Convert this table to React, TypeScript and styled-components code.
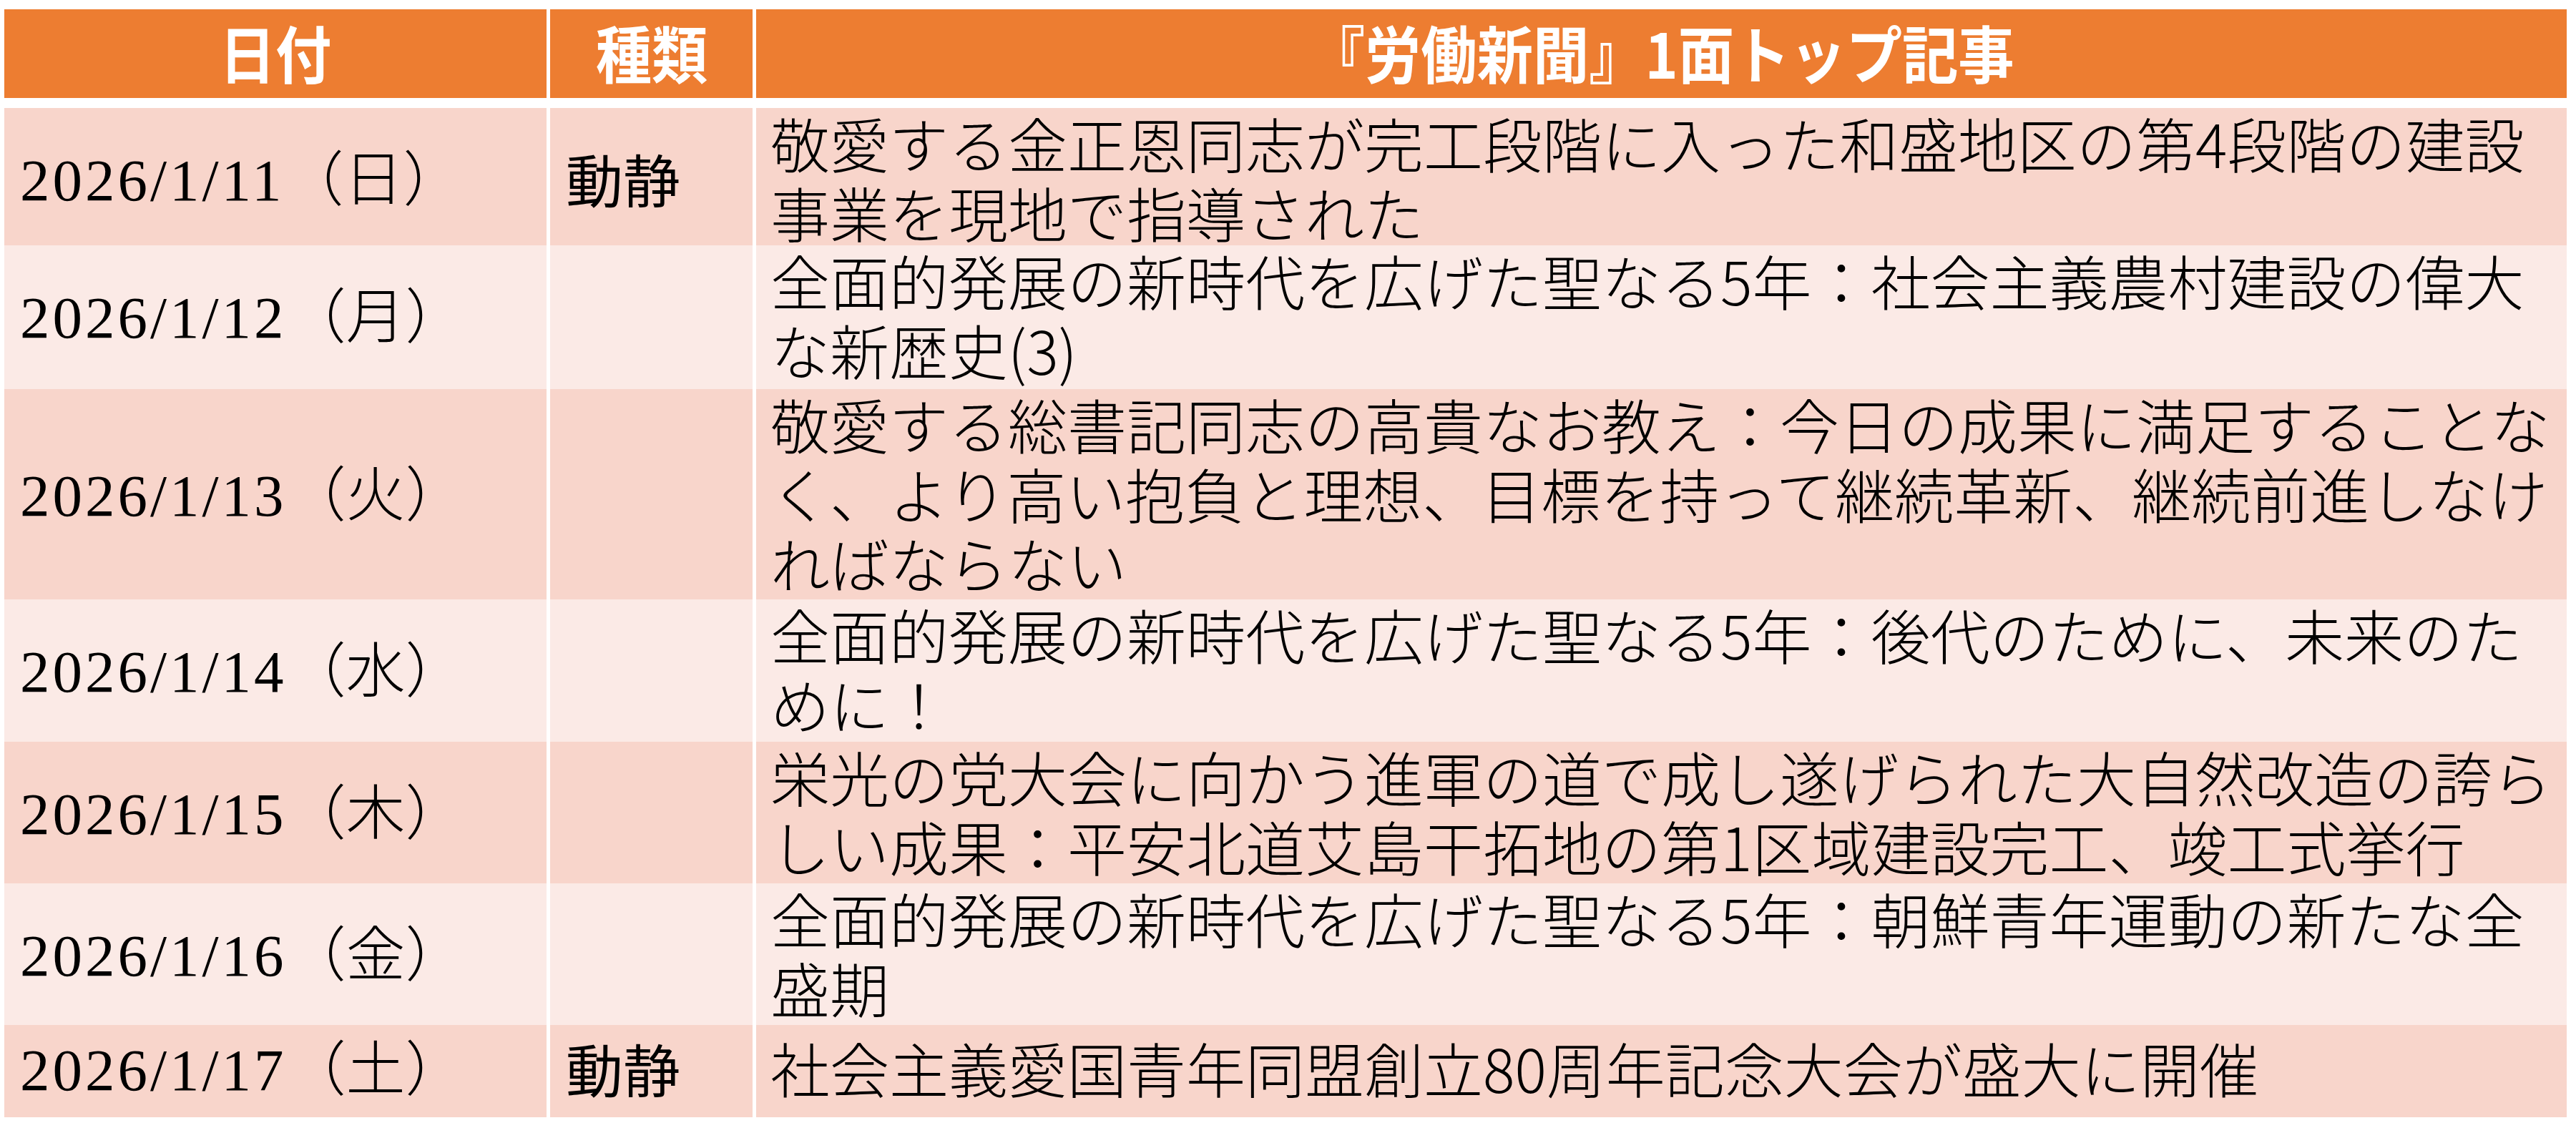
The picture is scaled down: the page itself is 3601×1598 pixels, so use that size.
import React from 'react';
import styled, { createGlobalStyle } from 'styled-components';

type Tone = 'dark' | 'light';

interface Entry {
    day: string;
    weekday: string;
    kind?: string;
    lines: string[];
    height: number;
    tone: Tone;
}

const entries: Entry[] = [
    {
        day: '2026/1/11',
        weekday: '（日）',
        kind: '動静',
        lines: ['敬愛する金正恩同志が完工段階に入った和盛地区の第4段階の建設', '事業を現地で指導された'],
        height: 188,
        tone: 'dark',
    },
    {
        day: '2026/1/12',
        weekday: '（月）',
        lines: ['全面的発展の新時代を広げた聖なる5年：社会主義農村建設の偉大', 'な新歴史(3)'],
        height: 197,
        tone: 'light',
    },
    {
        day: '2026/1/13',
        weekday: '（火）',
        lines: [
            '敬愛する総書記同志の高貴なお教え：今日の成果に満足することな',
            'く、より高い抱負と理想、目標を持って継続革新、継続前進しなけ',
            'ればならない',
        ],
        height: 290,
        tone: 'dark',
    },
    {
        day: '2026/1/14',
        weekday: '（水）',
        lines: ['全面的発展の新時代を広げた聖なる5年：後代のために、未来のた', 'めに！'],
        height: 195,
        tone: 'light',
    },
    {
        day: '2026/1/15',
        weekday: '（木）',
        lines: ['栄光の党大会に向かう進軍の道で成し遂げられた大自然改造の誇ら', 'しい成果：平安北道艾島干拓地の第1区域建設完工、竣工式挙行'],
        height: 194,
        tone: 'dark',
    },
    {
        day: '2026/1/16',
        weekday: '（金）',
        lines: ['全面的発展の新時代を広げた聖なる5年：朝鮮青年運動の新たな全', '盛期'],
        height: 194,
        tone: 'light',
    },
    {
        day: '2026/1/17',
        weekday: '（土）',
        kind: '動静',
        lines: ['社会主義愛国青年同盟創立80周年記念大会が盛大に開催'],
        height: 129,
        tone: 'dark',
    },
];

const tones: Record<Tone, string> = {
    dark: '#F8D5CB',
    light: '#FBEAE6',
};

export default function App() {
    return (
        <>
            <GlobalStyle/>
            <Page>
                <Table>
                    <HeaderRow $height={124}>
                        <HeadCell><HeadLabel>日付</HeadLabel></HeadCell>
                        <HeadCell><HeadLabel>種類</HeadLabel></HeadCell>
                        <HeadCell><HeadLabel>『労働新聞』1面トップ記事</HeadLabel></HeadCell>
                    </HeaderRow>
                    {entries.map((entry) => (
                        <Row key={entry.day} $height={entry.height}>
                            <BodyCell $tone={entry.tone} $padX={22}>
                                <DateText>
                                    <DayNumber>{entry.day}</DayNumber>
                                    <Weekday>{entry.weekday}</Weekday>
                                </DateText>
                            </BodyCell>
                            <BodyCell $tone={entry.tone} $padX={22}>
                                {entry.kind && <KindText>{entry.kind}</KindText>}
                            </BodyCell>
                            <BodyCell $tone={entry.tone} $padX={20}>
                                <Headline>
                                    {entry.lines.map((line) => (
                                        <HeadlineLine key={line}>{line}</HeadlineLine>
                                    ))}
                                </Headline>
                            </BodyCell>
                        </Row>
                    ))}
                </Table>
            </Page>
        </>
    );
}

const GlobalStyle = createGlobalStyle`
    html, body {
        margin: 0;
        background: #ffffff;
    }
`;

const Page = styled.main`
    padding: 13px 13px 0 6px;
`;

const Table = styled.div`
    display: flex;
    flex-direction: column;
    gap: 4px;
    width: 3582px;
`;

const Row = styled.div<{ $height: number }>`
    display: grid;
    grid-template-columns: 758px 283px 1fr;
    column-gap: 5px;
    height: ${(p) => p.$height}px;
`;

const HeaderRow = styled(Row)`
    margin-bottom: 10px;
`;

const HeadCell = styled.div`
    display: flex;
    align-items: center;
    justify-content: center;
    background: #ED7D31;
    color: #ffffff;
    font-family: "Noto Sans CJK JP", sans-serif;
    font-weight: 700;
    font-size: 87px;
    line-height: 1;
    padding-bottom: 6px;
    box-sizing: border-box;
`;

const HeadLabel = styled.span`
    display: inline-block;
    white-space: nowrap;
    transform: scaleX(0.9);
`;

const BodyCell = styled.div<{ $tone: Tone; $padX: number }>`
    display: flex;
    align-items: center;
    background: ${(p) => tones[p.$tone]};
    color: #000000;
    padding: 0 ${(p) => p.$padX}px 10px;
    box-sizing: border-box;
    min-width: 0;
`;

const DateText = styled.span`
    display: inline-flex;
    align-items: baseline;
    font-size: 83px;
    line-height: 97px;
    white-space: nowrap;
`;

const DayNumber = styled.span`
    font-family: "Liberation Serif", serif;
    letter-spacing: 4px;
`;

const Weekday = styled.span`
    font-family: "Noto Sans CJK JP", sans-serif;
    font-weight: 300;
`;

const KindText = styled.span`
    font-family: "Noto Sans CJK JP", sans-serif;
    font-size: 80px;
    line-height: 97px;
    white-space: nowrap;
`;

const Headline = styled.div`
    display: flex;
    flex-direction: column;
    font-family: "Noto Sans CJK JP", sans-serif;
    font-weight: 300;
    font-size: 83px;
    line-height: 97px;
`;

const HeadlineLine = styled.span`
    white-space: nowrap;
`;
